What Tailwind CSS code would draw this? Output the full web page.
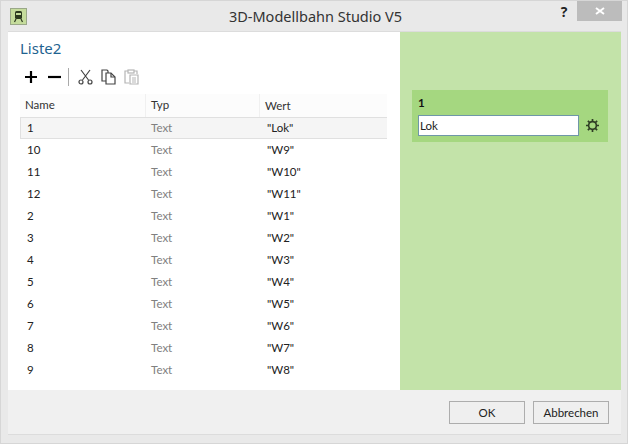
<!doctype html>
<html lang="de">
<head>
<meta charset="utf-8">
<script src="https://cdn.jsdelivr.net/npm/@tailwindcss/browser@4"></script>
<title>3D-Modellbahn Studio V5</title>
</head>
<body class="w-[628px] h-[444px] overflow-hidden bg-[#e9e9e9] font-['Lato',sans-serif] text-[11.5px] text-[#222]">
<div class="w-[628px] h-[444px] flex flex-col border border-[#d6d6d6]">
  <!-- title bar -->
  <div class="h-[30px] flex items-start shrink-0">
    <div class="w-[76px] shrink-0">
      <div class="ml-[9px] mt-[7px] w-[17px] h-[17px] bg-[#c5dc9c] border border-[#9aa888] flex items-center justify-center">
        <svg width="11" height="13" viewBox="0 0 11 13"><rect x="2" y="1" width="7" height="8" rx="1.5" fill="#2d3a20"/><rect x="3" y="3" width="5" height="2" fill="#c5dc9c"/><path d="M3 9 1.5 12M8 9l1.5 3" stroke="#2d3a20" stroke-width="1.2"/></svg>
      </div>
    </div>
    <div class="flex-1 text-center text-[14.5px] leading-[30px] text-[#333] font-['Noto_Sans',sans-serif]">3D-Modellbahn Studio V5</div>
    <div class="w-[20px] text-center text-[14px] font-bold leading-[20px] mt-[1px] mr-[3px] text-[#222] font-['Open_Sans',sans-serif]">?</div>
    <div class="w-[45px] h-[20px] mr-[5px] bg-[#bcbcbc] flex items-center justify-center">
      <svg width="10" height="10" viewBox="0 0 10 10"><path d="M1 2l8 6M9 2 1 8" stroke="#fff" stroke-width="2"/></svg>
    </div>
  </div>
  <!-- client area -->
  <div class="w-[613px] ml-[7px] h-[404px] bg-[#f0f0f0] border-b border-[#dcdcdc] flex flex-col shrink-0">
    <div class="flex h-[359px] shrink-0 border-t border-[#dcdcdc]">
      <div class="w-[392px] bg-white pl-[12px] flex flex-col">
        <div class="h-[27px] mt-[4px] text-[15px] leading-[24px] text-[#1f6390] font-['Noto_Sans',sans-serif] shrink-0">Liste2</div>
        <div class="h-[27px] flex items-center pl-[4px] shrink-0">
          <svg width="14" height="14" viewBox="0 0 14 14"><path d="M7 1v12M1 7h12" stroke="#000" stroke-width="2.2"/></svg>
          <svg class="ml-[10px]" width="13" height="14" viewBox="0 0 13 14"><path d="M0 7h13" stroke="#000" stroke-width="2.2"/></svg>
          <div class="ml-[7px] w-px h-[18px] bg-[#aaa]"></div>
          <svg class="ml-[9px]" width="15" height="16" viewBox="0 0 15 16" fill="none" stroke="#444" stroke-width="1.2"><path d="M3 1l7.500 10M12 1 4.500 11"/><circle cx="3" cy="13" r="2"/><circle cx="12" cy="13" r="2"/></svg>
          <svg class="ml-[8px]" width="15" height="16" viewBox="0 0 15 16" fill="none" stroke="#444" stroke-width="1.2"><path d="M1 1h5l1 1v10H1z"/><path d="M5 4h5l4 4v7H5z" fill="#fff"/><path d="M10 4v4h4"/></svg>
          <svg class="ml-[8px]" width="15" height="16" viewBox="0 0 15 16" fill="none" stroke="#b5b5b5" stroke-width="1.2"><path d="M4 2H1v12h4"/><path d="M10 2h3v3"/><rect x="4" y="1" width="6" height="3"/><path d="M6 6h8v9H6zM8 9h4M8 11h4M8 13h4"/></svg>
        </div>
        <div class="w-[367px] mt-[4px] flex flex-col">
          <div class="h-[23px] flex items-center bg-[#fcfcfc] text-[#333]">
            <div class="w-[126px] pl-[5px] h-full leading-[22px] border-r border-[#f0f0f0]">Name</div>
            <div class="w-[114px] pl-[5px] h-full leading-[22px] border-r border-[#f0f0f0]">Typ</div>
            <div class="flex-1 pl-[5px] leading-[22px]">Wert</div>
          </div>
          <div class="h-[22px] flex items-center bg-[#f5f5f5] border-y border-l border-[#e0e0e0]"><div class="w-[125px] pl-[6px]">1</div><div class="w-[114px] pl-[5px] text-[#808080]">Text</div><div class="pl-[7px]">"Lok"</div></div>
          <div class="h-[22px] flex items-center"><div class="w-[126px] pl-[7px]">10</div><div class="w-[114px] pl-[5px] text-[#808080]">Text</div><div class="pl-[7px]">"W9"</div></div>
          <div class="h-[22px] flex items-center"><div class="w-[126px] pl-[7px]">11</div><div class="w-[114px] pl-[5px] text-[#808080]">Text</div><div class="pl-[7px]">"W10"</div></div>
          <div class="h-[22px] flex items-center"><div class="w-[126px] pl-[7px]">12</div><div class="w-[114px] pl-[5px] text-[#808080]">Text</div><div class="pl-[7px]">"W11"</div></div>
          <div class="h-[22px] flex items-center"><div class="w-[126px] pl-[7px]">2</div><div class="w-[114px] pl-[5px] text-[#808080]">Text</div><div class="pl-[7px]">"W1"</div></div>
          <div class="h-[22px] flex items-center"><div class="w-[126px] pl-[7px]">3</div><div class="w-[114px] pl-[5px] text-[#808080]">Text</div><div class="pl-[7px]">"W2"</div></div>
          <div class="h-[22px] flex items-center"><div class="w-[126px] pl-[7px]">4</div><div class="w-[114px] pl-[5px] text-[#808080]">Text</div><div class="pl-[7px]">"W3"</div></div>
          <div class="h-[22px] flex items-center"><div class="w-[126px] pl-[7px]">5</div><div class="w-[114px] pl-[5px] text-[#808080]">Text</div><div class="pl-[7px]">"W4"</div></div>
          <div class="h-[22px] flex items-center"><div class="w-[126px] pl-[7px]">6</div><div class="w-[114px] pl-[5px] text-[#808080]">Text</div><div class="pl-[7px]">"W5"</div></div>
          <div class="h-[22px] flex items-center"><div class="w-[126px] pl-[7px]">7</div><div class="w-[114px] pl-[5px] text-[#808080]">Text</div><div class="pl-[7px]">"W6"</div></div>
          <div class="h-[22px] flex items-center"><div class="w-[126px] pl-[7px]">8</div><div class="w-[114px] pl-[5px] text-[#808080]">Text</div><div class="pl-[7px]">"W7"</div></div>
          <div class="h-[22px] flex items-center"><div class="w-[126px] pl-[7px]">9</div><div class="w-[114px] pl-[5px] text-[#808080]">Text</div><div class="pl-[7px]">"W8"</div></div>
        </div>
      </div>
      <div class="flex-1 bg-[#c3e3a9] pl-[12px] pt-[58px]">
        <div class="w-[196px] h-[52px] bg-[#a5d780] pl-[6px] flex flex-col">
          <div class="h-[25px] leading-[26px] font-bold text-[#111]">1</div>
          <div class="flex items-center">
            <div class="w-[161px] h-[21px] bg-white border border-[#6f97a8] pl-[1px] leading-[19px]">Lok</div>
            <svg class="ml-[7px]" width="13" height="13" viewBox="0 0 14 14"><circle cx="7" cy="7" r="4.200" fill="none" stroke="#2f3d25" stroke-width="1.800"/><path d="M7 0v3M7 11v3M0 7h3M11 7h3M2 2l2 2M10 10l2 2M12 2l-2 2M4 10l-2 2" stroke="#2f3d25" stroke-width="1.800"/></svg>
          </div>
        </div>
      </div>
    </div>
    <!-- footer buttons -->
    <div class="flex-1 flex justify-end gap-[8px] pt-[11px] pr-[12px]">
      <div class="w-[76px] h-[23px] bg-[#efefef] border border-[#adadad] text-center leading-[21px]">OK</div>
      <div class="w-[76px] h-[23px] bg-[#efefef] border border-[#adadad] text-center leading-[21px]">Abbrechen</div>
    </div>
  </div>
</div>
</body>
</html>
